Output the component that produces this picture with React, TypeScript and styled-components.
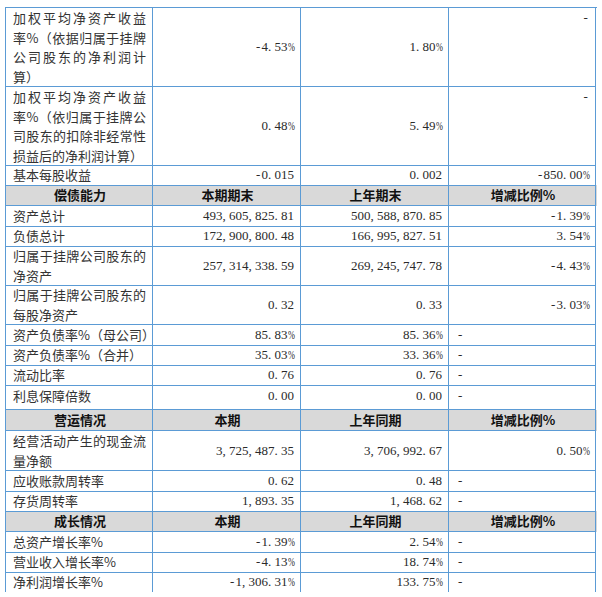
import React from "react";
import styled, { createGlobalStyle } from "styled-components";

const LINE = "#5b9bd5";

const GlobalStyle = createGlobalStyle`
  body {
    margin: 0;
    background: #fff;
  }
`

const Page = styled.div`
  padding: 7px 0 0 5px;
`

const Table = styled.div`
  width: 591px;
  border-top: 1px solid ${LINE};
  border-left: 1px solid ${LINE};
  color: #333;
  font-family: "Noto Sans CJK SC", sans-serif;
  font-size: 13px;
`

const Row = styled.div<{ $h: number; $head?: boolean }>`
  display: grid;
  grid-template-columns: 147px 148px 148px 147px;
  height: ${p => p.$h}px;
  background: ${p => (p.$head ? "#d9d9d9" : "#fff")};
`

const Cell = styled.div<{ $align?: "left" | "right" | "center"; $top?: boolean }>`
  display: flex;
  flex-direction: column;
  justify-content: ${p => (p.$top ? "flex-start" : "center")};
  align-items: ${p =>
    p.$align === "left" ? "flex-start" : p.$align === "center" ? "center" : "flex-end"};
  padding: 0 6px 0 8px;
  border-right: 1px solid ${LINE};
  border-bottom: 1px solid ${LINE};
  line-height: 19.5px;
  white-space: nowrap;
  min-width: 0;
`

const LabelCell = styled(Cell)`
  align-items: stretch;
  padding: 0 6px 0 7px;
`

const HeadCell = styled(Cell)`
  align-items: center;
  font-weight: 700;
  color: #111;
`

const Line = styled.span<{ $full?: boolean }>`
  display: block;
  white-space: nowrap;
  text-align: justify;
  text-align-last: ${p => (p.$full ? "justify" : "left")};
`

const Digits = styled.span`
  font-family: "Liberation Serif", serif;
  font-size: 13px;
  color: #2a2a2a;
`

const Narrow = styled.span`
  display: inline-block;
  width: 0.5em;
`

const Dash = styled.span`
  display: inline-block;
  width: 0.5em;
  text-align: center;
`

const Pct = styled.span`
  display: inline-block;
  width: 0.5em;
  transform: scaleX(0.64);
  transform-origin: left center;
`

type DataRow = {
  h: number
  label: string[]
  cur: string
  prev: string
  chg: string
  chgTop?: boolean
  chgLeft?: boolean
  top?: boolean
}

type Section = {
  head: string[]
  rows: DataRow[]
}

const Num = ({ v }: { v: string }) => (
  <Digits>
    {v.split("").map((c, i) => {
      if (c === "%") return <Pct key={i}>%</Pct>
      if (c === "." || c === ",") return <Narrow key={i}>{c}</Narrow>
      if (c === "-") return <Dash key={i}>-</Dash>
      return <React.Fragment key={i}>{c}</React.Fragment>
    })}
  </Digits>
)

const topRows: DataRow[] = [
  {
    h: 79,
    label: ["加权平均净资产收益", "率%（依据归属于挂牌", "公司股东的净利润计", "算）"],
    cur: "-4.53%",
    prev: "1.80%",
    chg: "-",
    chgTop: true,
  },
  {
    h: 78,
    label: ["加权平均净资产收益", "率%（依归属于挂牌公", "司股东的扣除非经常性", "损益后的净利润计算）"],
    cur: "0.48%",
    prev: "5.49%",
    chg: "-",
    chgTop: true,
  },
  { h: 20, label: ["基本每股收益"], cur: "-0.015", prev: "0.002", chg: "-850.00%" },
]

const sections: Section[] = [
  {
    head: ["偿债能力", "本期期末", "上年期末", "增减比例%"],
    rows: [
      { h: 20, label: ["资产总计"], cur: "493,605,825.81", prev: "500,588,870.85", chg: "-1.39%" },
      { h: 20, label: ["负债总计"], cur: "172,900,800.48", prev: "166,995,827.51", chg: "3.54%" },
      {
        h: 39,
        label: ["归属于挂牌公司股东的", "净资产"],
        cur: "257,314,338.59",
        prev: "269,245,747.78",
        chg: "-4.43%",
      },
      { h: 40, label: ["归属于挂牌公司股东的", "每股净资产"], cur: "0.32", prev: "0.33", chg: "-3.03%" },
      { h: 20, label: ["资产负债率%（母公司）"], cur: "85.83%", prev: "85.36%", chg: "-", chgLeft: true },
      { h: 20, label: ["资产负债率%（合并）"], cur: "35.03%", prev: "33.36%", chg: "-", chgLeft: true },
      { h: 21, label: ["流动比率"], cur: "0.76", prev: "0.76", chg: "-", chgLeft: true },
      { h: 24, label: ["利息保障倍数"], cur: "0.00", prev: "0.00", chg: "-", chgLeft: true, top: true },
    ],
  },
  {
    head: ["营运情况", "本期", "上年同期", "增减比例%"],
    rows: [
      {
        h: 40,
        label: ["经营活动产生的现金流", "量净额"],
        cur: "3,725,487.35",
        prev: "3,706,992.67",
        chg: "0.50%",
      },
      { h: 20, label: ["应收账款周转率"], cur: "0.62", prev: "0.48", chg: "-", chgLeft: true },
      { h: 20, label: ["存货周转率"], cur: "1,893.35", prev: "1,468.62", chg: "-", chgLeft: true },
    ],
  },
  {
    head: ["成长情况", "本期", "上年同期", "增减比例%"],
    rows: [
      { h: 20, label: ["总资产增长率%"], cur: "-1.39%", prev: "2.54%", chg: "-", chgLeft: true },
      { h: 20, label: ["营业收入增长率%"], cur: "-4.13%", prev: "18.74%", chg: "-", chgLeft: true },
      { h: 20, label: ["净利润增长率%"], cur: "-1,306.31%", prev: "133.75%", chg: "-", chgLeft: true },
    ],
  },
]

const DataLine = ({ row }: { row: DataRow }) => (
  <Row $h={row.h}>
    <LabelCell $top={row.top}>
      {row.label.map((l, i) => (
        <Line key={i} $full={i < row.label.length - 1}>
          {l}
        </Line>
      ))}
    </LabelCell>
    <Cell $top={row.top}>
      <Num v={row.cur} />
    </Cell>
    <Cell $top={row.top}>
      <Num v={row.prev} />
    </Cell>
    <Cell $top={row.top || row.chgTop} $align={row.chgLeft ? "left" : "right"}>
      <Num v={row.chg} />
    </Cell>
  </Row>
)

const App = () => {
  return (
    <Page>
      <GlobalStyle />
      <Table>
        {topRows.map((r, i) => (
          <DataLine key={i} row={r} />
        ))}
        {sections.map((s, si) => (
          <React.Fragment key={si}>
            <Row $h={21} $head>
              {s.head.map(t => (
                <HeadCell key={t}>{t}</HeadCell>
              ))}
            </Row>
            {s.rows.map((r, i) => (
              <DataLine key={i} row={r} />
            ))}
          </React.Fragment>
        ))}
      </Table>
    </Page>
  )
}

export default App
